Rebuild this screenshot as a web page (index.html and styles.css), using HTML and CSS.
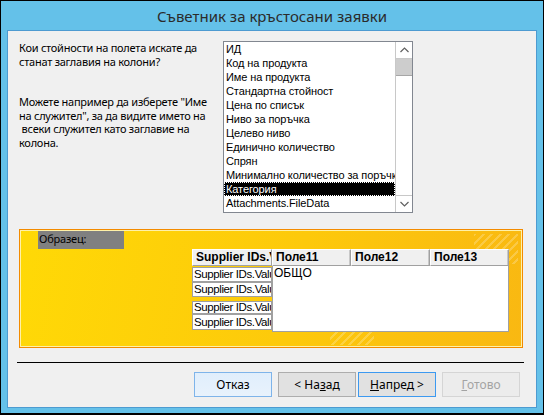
FILE: index.html
```html
<!DOCTYPE html>
<html lang="bg">
<head>
  <meta charset="UTF-8">
  <title>Съветник за кръстосани заявки</title>
  <!-- Wizard dialog styling -->
  <link rel="stylesheet" href="styles.css">
</head>
<body>

  <div class="window">
    <!-- Caption -->
    <div class="titlebar">Съветник за кръстосани заявки</div>

    <div class="client">
      <!-- Question + field list -->
      <div class="top">
        <div class="hint">
          <p>Кои стойности на полета искате да<br>станат заглавия на колони?</p>
          <p>Можете например да изберете "Име<br>на служител", за да видите името на<br>&nbsp;всеки служител като заглавие на<br>колона.</p>
        </div>

        <div class="listbox">
          <ul class="items">
            <li>ИД</li>
            <li>Код на продукта</li>
            <li>Име на продукта</li>
            <li>Стандартна стойност</li>
            <li>Цена по списък</li>
            <li>Ниво за поръчка</li>
            <li>Целево ниво</li>
            <li>Единично количество</li>
            <li>Спрян</li>
            <li>Минимално количество за поръчка</li>
            <li class="selected"><span>Категория</span></li>
            <li>Attachments.FileData</li>
          </ul>
          <div class="scrollbar">
            <div class="arrow">
              <svg width="9" height="6" viewBox="0 0 9 6"><polyline points="0.5,5 4.5,1 8.5,5" /></svg>
            </div>
            <div class="thumb"></div>
            <div class="track"></div>
            <div class="arrow">
              <svg width="9" height="6" viewBox="0 0 9 6"><polyline points="0.5,1 4.5,5 8.5,1" /></svg>
            </div>
          </div>
        </div>
      </div>

      <!-- Sample preview -->
      <div class="sample">
        <div class="sample-label">Образец:</div>
        <div class="grid">
          <div class="row-heads">
            <div class="cell head">Supplier IDs.Value</div>
            <div class="cell r1">Supplier IDs.Value</div>
            <div class="cell r2">Supplier IDs.Value</div>
            <div class="cell r3">Supplier IDs.Value</div>
            <div class="cell r4">Supplier IDs.Value</div>
          </div>
          <div class="data">
            <div class="data-head">
              <div class="hcell">Поле11</div>
              <div class="hcell">Поле12</div>
              <div class="hcell">Поле13</div>
            </div>
            <div class="data-body">ОБЩО</div>
          </div>
        </div>
      </div>

      <hr class="separator">

      <!-- Wizard buttons -->
      <div class="buttons">
        <button class="btn hot">Отказ</button>
        <button class="btn">&lt; На<u>з</u>ад</button>
        <button class="btn default"><u>Н</u>апред &gt;</button>
        <button class="btn" disabled><u>Г</u>отово</button>
      </div>
    </div>
  </div>

</body>
</html>
```

FILE: styles.css
```css
/* Page */
body {
  margin: 0;
  padding: 0;
  background-color: #000;
  font-family: 'Noto Sans', sans-serif;
}

/* Window frame */
.window {
  width: 544px;
  height: 415px;
  box-sizing: border-box;
  border: 1px solid #000;
  border-bottom-width: 2px;
  padding: 0 6px 5px 6px;
  background-color: #64c1e9;
}

.titlebar {
  height: 29px;
  line-height: 30px;
  text-align: center;
  font-size: 15px;
  color: #2b2b2b;
}

.client {
  height: 378px;
  box-sizing: border-box;
  border: 1px solid #4d9bd1;
  background-color: #f0f0f0;
}

/* Top part */
.top {
  display: flex;
  gap: 8px;
  padding: 10px 0 0 11px;
}

.hint {
  width: 196px;
  font-size: 11px;
  letter-spacing: -0.25px;
  line-height: 13.5px;
  color: #000;
  white-space: nowrap;
}

.hint p {
  margin: 0 0 27px 0;
}

/* Field list */
.listbox {
  width: 190px;
  height: 172px;
  box-sizing: border-box;
  border: 1px solid #828790;
  background-color: #fff;
  display: flex;
}

.items {
  list-style: none;
  margin: 0;
  padding: 0;
  width: 171px;
  overflow: hidden;
  font-family: 'Liberation Sans', sans-serif;
  font-size: 11px;
  letter-spacing: -0.1px;
  color: #000;
}

.items li {
  height: 14px;
  line-height: 14px;
  padding-left: 2px;
  white-space: nowrap;
}

.items li.selected {
  background-color: #000;
  color: #fff;
  padding-left: 0;
}

.items li.selected span {
  display: block;
  height: 12px;
  line-height: 12px;
  padding-left: 1px;
  border: 1px dotted #fff;
}

.scrollbar {
  width: 17px;
  box-sizing: border-box;
  border-left: 1px solid #c8c8c8;
  display: flex;
  flex-direction: column;
}

.scrollbar .arrow {
  height: 16px;
  display: flex;
  align-items: center;
  justify-content: center;
  border-bottom: 1px solid #c8c8c8;
}

.scrollbar .arrow:last-child {
  border-bottom: none;
  border-top: 1px solid #c8c8c8;
}

.scrollbar svg polyline {
  fill: none;
  stroke: #606060;
  stroke-width: 1.2;
}

.scrollbar .thumb {
  height: 16px;
  background-color: #cdcdcd;
  border-bottom: 1px solid #a6a6a6;
}

.scrollbar .track {
  flex: 1;
}

/* Sample preview */
.sample {
  height: 119px;
  box-sizing: border-box;
  margin: 16px 13px 0 11px;
  padding: 1px 0 0 18px;
  border: 1px solid #f38b00;
  box-shadow: inset 0 0 0 1px #fff1a8;
  background:
    repeating-linear-gradient(135deg, rgba(255, 255, 255, 0.22) 0 2px, transparent 2px 6px) right 4px top 4px / 44px 30px no-repeat,
    repeating-linear-gradient(135deg, rgba(255, 255, 255, 0.22) 0 2px, transparent 2px 6px) left 310px bottom 2px / 44px 16px no-repeat,
    linear-gradient(100deg, #ffd906 0%, #fdc90b 55%, #f9b812 100%);
}

.sample-label {
  width: 86px;
  height: 18px;
  line-height: 16px;
  background-color: #808080;
  font-size: 11px;
  letter-spacing: -0.2px;
  color: #000;
  padding-left: 1px;
  box-sizing: border-box;
}

.grid {
  display: flex;
  margin-left: 154px;
  font-family: 'Liberation Sans', sans-serif;
  font-size: 12px;
  color: #000;
}

.row-heads {
  width: 80px;
}

.cell {
  box-sizing: border-box;
  height: 15px;
  line-height: 13px;
  border: 1px solid #a0a0a0;
  background-color: #fff;
  padding-left: 1px;
  font-size: 11.5px;
  letter-spacing: -0.4px;
  white-space: nowrap;
  overflow: hidden;
}

.cell.head {
  height: 17px;
  line-height: 15px;
  font-size: 12px;
  letter-spacing: 0;
  font-weight: bold;
  background-color: #f0f0f0;
  border-color: #fff #a0a0a0 #a0a0a0 #fff;
  padding-left: 3px;
}

.cell.r1 { margin-top: 1px; }
.cell.r3 { margin-top: 4px; height: 13px; line-height: 11px; }
.cell.r4 { height: 16px; line-height: 14px; }

.data {
  width: 237px;
  display: flex;
  flex-direction: column;
}

.data-head {
  display: flex;
  height: 17px;
}

.hcell {
  width: 79px;
  box-sizing: border-box;
  border: 1px solid;
  border-color: #fff #a0a0a0 #a0a0a0 #fff;
  box-shadow: inset -1px 0 0 #c8c8c8;
  background-color: #f0f0f0;
  font-weight: bold;
  line-height: 15px;
  padding-left: 3px;
}

.data-body {
  height: 66px;
  box-sizing: border-box;
  background-color: #fff;
  border: 1px solid #a0a0a0;
  border-top: none;
  padding: 1px 0 0 1px;
  line-height: 13px;
}

/* Divider line above the buttons */
.separator {
  margin: 14px 12px 0 9px;
  border: none;
  border-top: 1px solid #000;
  height: 0;
}

/* Buttons */
.buttons {
  display: flex;
  justify-content: flex-end;
  padding: 9px 16px 0 0;
}

.btn {
  width: 78px;
  height: 25px;
  margin-left: 6px;
  font-family: 'Noto Sans', sans-serif;
  font-size: 12px;
  color: #000;
  background-color: #e1e1e1;
  border: 1px solid #adadad;
  padding: 0;
}

.btn.hot {
  background: linear-gradient(#e0eefc, #e8f2fc);
  border-color: #7eb4ea;
}

.btn.default {
  margin-left: 2px;
  border-color: #3c99f0;
}

.btn:disabled {
  background-color: #ececec;
  border-color: #d5d5d5;
  color: #a3a3a3;
}
```
